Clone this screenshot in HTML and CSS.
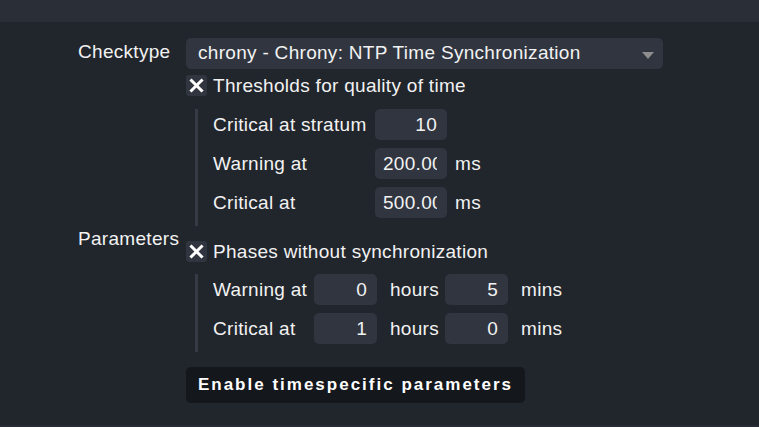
FILE: index.html
```html
<!DOCTYPE html>
<html>
<head>
<meta charset="utf-8">
<link rel="stylesheet" href="styles.css">
</head>
<body>
<div class="topbar"></div>
<div class="form">
  <div class="row">
    <div class="label top">Checktype</div>
    <div class="content">
      <div class="select">
        <span>chrony - Chrony: NTP Time Synchronization</span>
        <span class="arrow"></span>
      </div>
    </div>
  </div>
  <div class="row params">
    <div class="label">Parameters</div>
    <div class="content">
      <div class="check"><span class="box"><svg width="21" height="21" viewBox="0 0 21 21"><path d="M5.5 5.5 L15.5 15.5 M15.5 5.5 L5.5 15.5" stroke="#ffffff" stroke-width="3" stroke-linecap="square" fill="none"/></svg></span><span>Thresholds for quality of time</span></div>
      <div class="nested">
        <div class="line"><span class="lbl w1">Critical at stratum</span><input class="num n72" value="10"></div>
        <div class="line"><span class="lbl w1">Warning at</span><input class="num n72" value="200.00"><span class="unit">ms</span></div>
        <div class="line"><span class="lbl w1">Critical at</span><input class="num n72" value="500.00"><span class="unit">ms</span></div>
      </div>
      <div class="check second"><span class="box"><svg width="21" height="21" viewBox="0 0 21 21"><path d="M5.5 5.5 L15.5 15.5 M15.5 5.5 L5.5 15.5" stroke="#ffffff" stroke-width="3" stroke-linecap="square" fill="none"/></svg></span><span>Phases without synchronization</span></div>
      <div class="nested">
        <div class="line"><span class="lbl w2">Warning at</span><input class="num n63" value="0"><span class="unit u2">hours</span><input class="num n63" value="5"><span class="unit u2">mins</span></div>
        <div class="line"><span class="lbl w2">Critical at</span><input class="num n63" value="1"><span class="unit u2">hours</span><input class="num n63" value="0"><span class="unit u2">mins</span></div>
      </div>
      <button class="btn">Enable timespecific parameters</button>
    </div>
  </div>
</div>
<div class="bottombar"></div>
</body>
</html>
```
FILE: styles.css
```css
html, body {
  margin: 0;
  padding: 0;
  background: #21252c;
  color: #f2f2f2;
  font-family: "Liberation Sans", Arial, sans-serif;
  font-size: 19px;
  letter-spacing: 0.3px;
  height: 427px;
  overflow: hidden;
}
.topbar {
  height: 22px;
  background: #2a2e37;
}
.form {
  padding: 16px 0 0 78px;
  height: 387px;
}
.row {
  display: flex;
  align-items: center;
}
.label {
  width: 108px;
  flex: none;
}
.label.top {
  padding-bottom: 3px;
}
.content {
  flex: none;
}
.select {
  width: 477px;
  height: 31px;
  box-sizing: border-box;
  background: #30353f;
  border-radius: 5px;
  padding: 0 9px 2px 12px;
  display: flex;
  align-items: center;
  justify-content: space-between;
}
.arrow {
  width: 0;
  height: 0;
  border-left: 6px solid transparent;
  border-right: 6px solid transparent;
  border-top: 7px solid #8d8d8d;
  margin-top: 5px;
}
.params {
  margin-top: 6px;
}
.check {
  display: flex;
  align-items: center;
  height: 21px;
}
.check.second {
  margin-top: 15px;
}
.box {
  width: 21px;
  height: 21px;
  background: #30353f;
  border-radius: 3px;
  display: flex;
  margin-right: 6px;
}
.nested {
  margin: 13px 0 0 9px;
  border-left: 3px solid #353a44;
  padding: 0 0 8px 15px;
  display: flex;
  flex-direction: column;
  gap: 8px;
}
.check.second + .nested {
  margin-top: 12px;
}
.line {
  display: flex;
  align-items: center;
  height: 31px;
}
.lbl.w1 { width: 162px; }
.lbl.w2 { width: 101px; }
.num {
  height: 31px;
  box-sizing: border-box;
  background: #30353f;
  border: none;
  border-radius: 5px;
  color: #f2f2f2;
  font-family: "Liberation Sans", Arial, sans-serif;
  font-size: 19px;
  letter-spacing: 0.3px;
  text-align: right;
  padding: 0 10px 0 8px;
  outline: none;
  margin: 0;
}
.n72 { width: 72px; }
.n63 { width: 63px; }
.unit {
  margin-left: 8px;
}
.unit.u2 {
  margin-left: 13px;
  width: 55px;
}
.btn {
  margin-top: 15px;
  width: 339px;
  height: 36px;
  background: #14171c;
  border: none;
  border-radius: 5px;
  color: #ffffff;
  font-family: "Liberation Sans", Arial, sans-serif;
  font-weight: bold;
  font-size: 17px;
  letter-spacing: 2px;
  padding: 0;
  text-align: center;
}
.bottombar {
  height: 2px;
  background: #272b33;
}
```
